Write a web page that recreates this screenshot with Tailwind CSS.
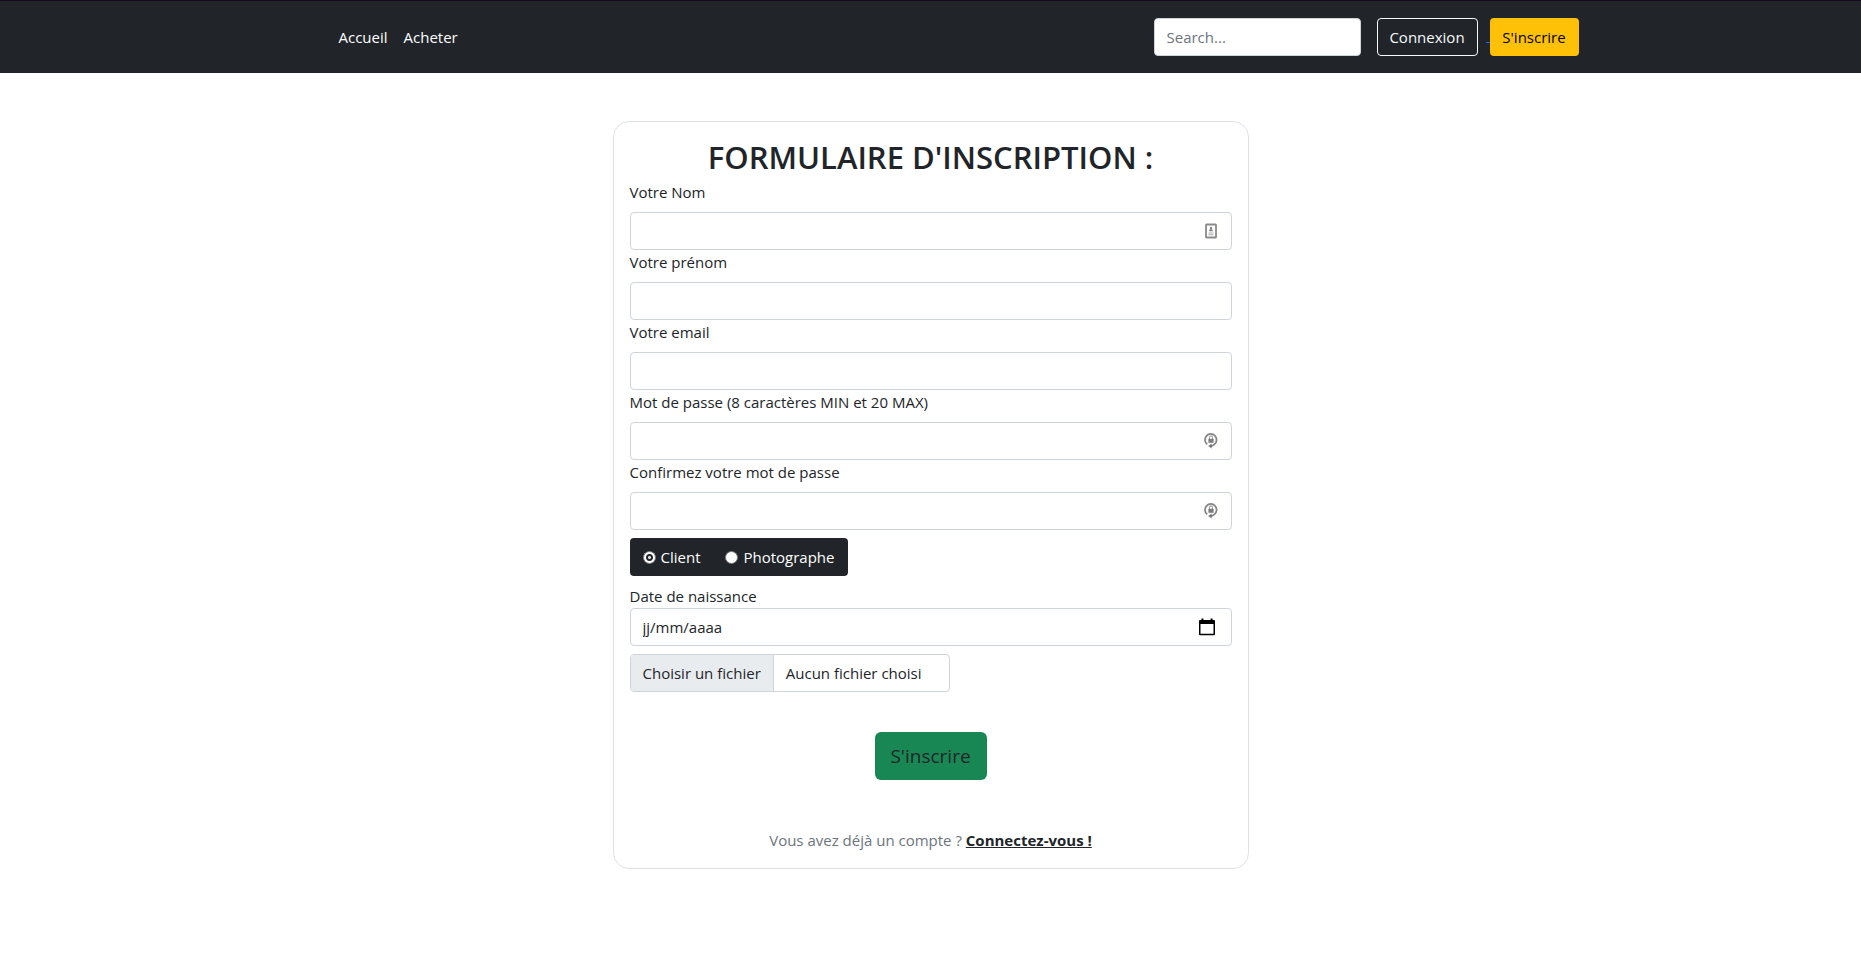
<!DOCTYPE html>
<html lang="fr">
<head>
<meta charset="utf-8">
<meta name="viewport" content="width=device-width, initial-scale=1">
<title>Inscription</title>
<script src="https://cdn.jsdelivr.net/npm/@tailwindcss/browser@4"></script>
</head>
<body class="min-h-screen bg-white font-['Open_Sans','Noto_Sans',sans-serif] text-[15px] leading-6 text-[#212529]">
  <header class="border-t border-[#1a0922] bg-[#212529]">
    <div class="mx-auto flex max-w-[1320px] flex-wrap items-center px-3 py-[17px]">
      <nav class="mr-auto ml-12 flex text-white">
        <a href="#" class="px-2 py-[7px]">Accueil</a>
        <a href="#" class="px-2 py-[7px]">Acheter</a>
      </nav>
      <input type="search" aria-label="Search" placeholder="Search..." class="mr-4 h-[38px] w-[207px] rounded border border-[#ced4da] bg-white px-3 placeholder:text-[#6c757d]">
      <button type="button" class="h-[38px] w-[101px] rounded border border-[#f8f9fa] text-[#f8f9fa]">Connexion</button>
      <a href="#" class="ml-2 flex items-center"><span class="mt-2.5 h-px w-1 bg-[#0d6efd]"></span><span class="flex h-[38px] w-[89px] items-center justify-center rounded bg-[#ffc107] text-black">S'inscrire</span></a>
    </div>
  </header>

  <main class="px-3 pt-12">
    <form class="mx-auto flex max-w-[636px] flex-col rounded-2xl border border-[#dee2e6] p-4">
      <h1 class="mb-1 text-center text-[31px] leading-[38px] font-semibold">FORMULAIRE D'INSCRIPTION :</h1>

      <label for="nom" class="mb-2">Votre Nom</label>
      <div class="relative">
        <input id="nom" type="text" class="h-[38px] w-full rounded border border-[#ced4da] px-3 pr-10">
        <svg class="absolute top-[11px] right-3.5 h-4 w-[13px]" viewBox="0 0 13 16" fill="none">
          <rect x="1" y="1.5" width="10" height="13" rx=".6" stroke="#8a8a8a" stroke-width="1.8"/>
          <circle cx="6" cy="5" r="1.2" fill="#858585"/>
          <path d="M4 8.2c0-3 4-3 4 0z" fill="#858585"/>
          <path d="M3.5 10h5M3.5 11.7h5" stroke="#aaa" stroke-width="1.1"/>
        </svg>
      </div>

      <label for="prenom" class="mb-2">Votre prénom</label>
      <input id="prenom" type="text" class="h-[38px] w-full rounded border border-[#ced4da] px-3">

      <label for="email" class="mb-2">Votre email</label>
      <input id="email" type="email" class="h-[38px] w-full rounded border border-[#ced4da] px-3">

      <label for="mdp" class="mb-2">Mot de passe (8 caractères MIN et 20 MAX)</label>
      <div class="relative">
        <input id="mdp" type="password" class="h-[38px] w-full rounded border border-[#ced4da] px-3 pr-10">
        <svg class="absolute top-2.5 right-3.5 h-[17px] w-[14px]" viewBox="0 0 14 17" fill="none">
          <path d="M3.2 12.3A5.8 5.8 0 1 1 10.4 12.3Q9 13.6 7 14.2" stroke="#858585" stroke-width="1.8"/>
          <path d="M4.2 14.1 7.6 11.6v5z" fill="#757575"/>
          <path d="M4.4 6.8h5.2v4H4.4z" fill="#7c7c7c"/>
          <path d="M5.5 7V5.4a1.5 1.5 0 0 1 3 0V7" stroke="#8a8a8a"/>
        </svg>
      </div>

      <label for="mdp2" class="mb-2">Confirmez votre mot de passe</label>
      <div class="relative">
        <input id="mdp2" type="password" class="h-[38px] w-full rounded border border-[#ced4da] px-3 pr-10">
        <svg class="absolute top-2.5 right-3.5 h-[17px] w-[14px]" viewBox="0 0 14 17" fill="none">
          <path d="M3.2 12.3A5.8 5.8 0 1 1 10.4 12.3Q9 13.6 7 14.2" stroke="#858585" stroke-width="1.8"/>
          <path d="M4.2 14.1 7.6 11.6v5z" fill="#757575"/>
          <path d="M4.4 6.8h5.2v4H4.4z" fill="#7c7c7c"/>
          <path d="M5.5 7V5.4a1.5 1.5 0 0 1 3 0V7" stroke="#8a8a8a"/>
        </svg>
      </div>

      <div class="mt-2 flex h-[38px] w-[218px] items-center justify-between self-start rounded bg-[#212529] px-[13px] text-white">
        <label class="flex items-center gap-[5px]"><input type="radio" name="role" checked class="h-[13px] w-[13px] appearance-none rounded-full border border-[#767676] bg-white checked:bg-[radial-gradient(circle,#e0e0e0_1px,#212529_2px,#212529_3px,white_4px)]">Client</label>
        <label class="flex items-center gap-[5px]"><input type="radio" name="role" class="h-[13px] w-[13px] appearance-none rounded-full border border-[#767676] bg-white checked:bg-[radial-gradient(circle,#e0e0e0_1px,#212529_2px,#212529_3px,white_4px)]">Photographe</label>
      </div>

      <label for="naissance" class="mt-2">Date de naissance</label>
      <div class="flex h-[38px] items-center rounded border border-[#ced4da] pr-4 pl-3">
        <input id="naissance" type="text" inputmode="numeric" placeholder="jj/mm/aaaa" class="min-w-0 flex-1 outline-none placeholder:text-[#212529]">
        <button type="button" aria-label="Ouvrir le calendrier">
          <svg class="h-[18px] w-4" viewBox="0 0 16 18"><path fill="#000" fill-rule="evenodd" d="M2.4.5h2V2h7.2V.5h2V2H15q1 0 1 1v13.2q0 1-1 1H1q-1 0-1-1V3q0-1 1-1h1.4zM1.5 6v9.7h13V6z"/></svg>
        </button>
      </div>

      <label class="mt-2 flex h-[38px] w-80 max-w-full items-center overflow-hidden rounded border border-[#ced4da]">
        <input type="file" class="sr-only">
        <span class="flex h-full items-center border-r border-[#ced4da] bg-[#e9ecef] px-3">Choisir un fichier</span>
        <span class="px-3">Aucun fichier choisi</span>
      </label>

      <button type="submit" class="mt-10 h-12 w-28 self-center rounded-md bg-[#198754] text-[19px]">S'inscrire</button>

      <p class="mt-12 text-center text-[#6c757d]">Vous avez déjà un compte ? <a href="#" class="font-bold text-[#212529] underline">Connectez-vous !</a></p>
    </form>
  </main>
</body>
</html>
